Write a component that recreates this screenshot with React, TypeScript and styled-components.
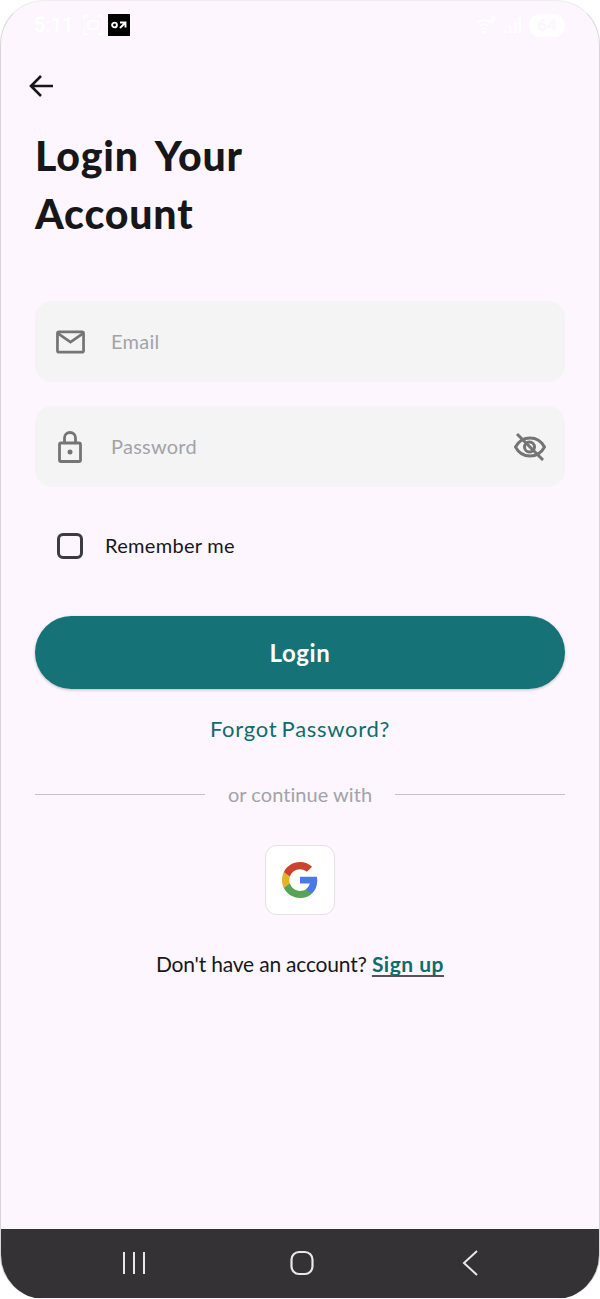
import React from "react";
import styled, { createGlobalStyle } from "styled-components";

const Global = createGlobalStyle`
  html, body { margin: 0; padding: 0; background: #fff; }
  body { font-family: "Lato", "Noto Sans", sans-serif; }
  * { box-sizing: border-box; }
`;

const Phone = styled.div`
  width: 600px;
  height: 1299px;
  background: #fdf6fe;
  border-radius: 44px;
  border: 1px solid #d9d6da;
  border-bottom: 0;
  border-top-color: #efedf0;
  overflow: hidden;
  display: flex;
  flex-direction: column;
`;

const StatusBar = styled.div`
  height: 48px;
  padding: 0 34px 0 33px;
  display: flex;
  align-items: center;
  justify-content: space-between;
  color: #ffffff;
`;

const StatusGroup = styled.div`
  display: flex;
  align-items: center;
  gap: ${(p: { $gap: number }) => p.$gap}px;
`;

const Time = styled.span`
  font-size: 20px;
  font-weight: 500;
  font-family: "Roboto", sans-serif;
`;

const AppBadge = styled.div`
  width: 22px;
  height: 22px;
  background: #000;
  display: flex;
  align-items: center;
  justify-content: center;
  margin-left: -5px;
`;

const Battery = styled.div`
  width: 36px;
  height: 23px;
  border-radius: 12px;
  background: #fff;
  color: #fdf6fe;
  font-family: "Roboto", sans-serif;
  font-size: 17px;
  font-weight: 700;
  display: flex;
  align-items: center;
  justify-content: center;
`;

const Content = styled.div`
  flex: 1;
  padding: 0 34px;
  display: flex;
  flex-direction: column;
`;

const BackButton = styled.div`
  height: 28px;
  margin: 23px 0 0 -7px;
  display: flex;
  align-items: center;
`;

const Title = styled.h1`
  margin: 27px 0 0;
  font-size: 41px;
  line-height: 58px;
  font-weight: 900;
  color: #17171a;
  letter-spacing: 0.85px;
  word-spacing: 7px;
`;

const Field = styled.div`
  height: 81px;
  margin-top: ${(p: { $top: number }) => p.$top}px;
  background: #f4f4f4;
  border-radius: 17px;
  display: flex;
  align-items: center;
  padding: 0 19px 0 19px;
`;

const FieldIcon = styled.div`
  width: 32px;
  display: flex;
  justify-content: center;
`;

const Placeholder = styled.span`
  flex: 1;
  margin-left: 25px;
  padding-bottom: 2px;
  font-size: 20px;
  letter-spacing: 0.25px;
  color: #a3a3a7;
`;

const RememberRow = styled.div`
  margin-top: 46px;
  height: 25px;
  padding-left: 22px;
  display: flex;
  align-items: center;
  gap: 22px;
`;

const Check = styled.div`
  width: 26px;
  height: 26px;
  border: 3px solid #3c3a42;
  border-radius: 6px;
`;

const RememberLabel = styled.span`
  padding-bottom: 2px;
  font-size: 20px;
  letter-spacing: 0.3px;
  color: #17171a;
`;

const LoginButton = styled.div`
  margin-top: 58px;
  height: 73px;
  border-radius: 37px;
  background: #157276;
  box-shadow: 0 1px 3px rgba(0, 0, 0, 0.25);
  color: #fff;
  font-size: 24px;
  font-weight: 700;
  letter-spacing: 0.6px;
  display: flex;
  align-items: center;
  justify-content: center;
`;

const Forgot = styled.div`
  margin-top: 23px;
  text-align: center;
  font-size: 22px;
  line-height: 34px;
  letter-spacing: 0.7px;
  word-spacing: -2px;
  color: #0e6c6c;
`;

const DividerRow = styled.div`
  margin-top: 33px;
  height: 30px;
  display: flex;
  align-items: center;
  gap: 23px;
`;

const Rule = styled.div`
  flex: 1;
  height: 1px;
  background: #c5c3c7;
`;

const DividerText = styled.span`
  font-size: 20px;
  letter-spacing: 0.05px;
  color: #a3a3a7;
`;

const SocialRow = styled.div`
  margin-top: 36px;
  display: flex;
  justify-content: center;
`;

const GoogleTile = styled.div`
  width: 70px;
  height: 70px;
  background: #fff;
  border: 1.5px solid #e4e2e5;
  border-radius: 12px;
  display: flex;
  align-items: center;
  justify-content: center;
`;

const SignupLine = styled.div`
  margin-top: 33px;
  text-align: center;
  font-size: 21px;
  line-height: 32px;
  letter-spacing: -0.2px;
  color: #17171a;
`;

const SignupLink = styled.span`
  font-weight: 700;
  letter-spacing: 0.5px;
  color: #0e6c6c;
  text-decoration: underline;
  text-decoration-color: #55535a;
  text-decoration-thickness: 2px;
  text-decoration-skip-ink: none;
  text-underline-offset: 3px;
`;

const NavBar = styled.div`
  height: 69px;
  background: #343234;
  display: flex;
  align-items: center;
  padding: 0 0 1px 49px;
  margin-bottom: 1px;
`;

const NavSlot = styled.div`
  width: 168px;
  display: flex;
  justify-content: center;
`;

export default function App() {
  return (
    <>
      <Global />
      <Phone>
        <StatusBar>
          <StatusGroup $gap={10}>
            <Time>5:11</Time>
            <svg width="20" height="20" viewBox="0 0 20 20" fill="none" stroke="#fff" strokeWidth="1.4">
              <path d="M1 5V1h4M15 1h4v4M19 15v4h-4M5 19H1v-4" />
              <rect x="5" y="6" width="10" height="8" rx="2.5" />
            </svg>
            <AppBadge>
              <svg width="16" height="8" viewBox="0 0 16 8" fill="none" stroke="#fff" strokeWidth="1.900">
                <circle cx="3.500" cy="4" r="2.400" />
                <path d="M9 1.500h5.500v5M14.500 1.500L9 7" />
              </svg>
            </AppBadge>
          </StatusGroup>
          <StatusGroup $gap={8}>
            <svg width="20" height="18" viewBox="0 0 20 18" fill="none" stroke="#fff" strokeWidth="1.6">
              <path d="M1 7c4-4 10-4 14 0M4 10c2.500-2 5.500-2 8 0M6.500 13c1-1 2-1 3 0" />
              <circle cx="8" cy="16" r="1" fill="#fff" />
              <path d="M16 1h3v2h-3v2h3" strokeWidth="1.2" />
            </svg>
            <svg width="17" height="18" viewBox="0 0 17 18" fill="#fff">
              <rect x="0" y="14" width="2.500" height="3" />
              <rect x="5" y="10" width="2.500" height="7" />
              <rect x="10" y="6" width="2.500" height="11" />
              <rect x="14.500" y="1" width="2.500" height="16" />
            </svg>
            <Battery>64</Battery>
          </StatusGroup>
        </StatusBar>
        <Content>
          <BackButton>
            <svg width="26" height="24" viewBox="0 0 26 24" fill="none" stroke="#17171a" strokeWidth="2.6">
              <path d="M25 12H3M13 2L3 12l10 10" />
            </svg>
          </BackButton>
          <Title>
            Login Your
            <br />
            Account
          </Title>
          <Field $top={58}>
            <FieldIcon>
              <svg width="29" height="24" viewBox="0 0 30 24" fill="none" stroke="#757575" strokeWidth="2.800">
                <rect x="1.500" y="1.500" width="27" height="21" rx="1.500" />
                <path d="M2 3l13 9 13-9" />
              </svg>
            </FieldIcon>
            <Placeholder>Email</Placeholder>
          </Field>
          <Field $top={24}>
            <FieldIcon>
              <svg width="24" height="32" viewBox="0 0 24 32" fill="none" stroke="#757575" strokeWidth="2.800">
                <rect x="1.500" y="12" width="21" height="18.500" rx="1.500" />
                <path d="M6.500 12V7a5.500 5.500 0 0 1 11 0v5" />
                <circle cx="12" cy="21" r="2.500" fill="#757575" stroke="none" />
              </svg>
            </FieldIcon>
            <Placeholder>Password</Placeholder>
            <svg width="32" height="28" viewBox="0 0 32 28" fill="none" stroke="#757575" strokeWidth="3">
              <path d="M1.500 14C5 7.500 10 5 16 5s11 2.500 14.500 9C27 20.500 22 23 16 23S5 20.500 1.500 14z" />
              <circle cx="15.500" cy="14" r="5" />
              <path d="M3 1l26 26" />
            </svg>
          </Field>
          <RememberRow>
            <Check />
            <RememberLabel>Remember me</RememberLabel>
          </RememberRow>
          <LoginButton>Login</LoginButton>
          <Forgot>Forgot Password?</Forgot>
          <DividerRow>
            <Rule />
            <DividerText>or continue with</DividerText>
            <Rule />
          </DividerRow>
          <SocialRow>
            <GoogleTile>
              <svg width="36" height="36" viewBox="0 0 48 48">
                <path fill="#4a78e8" d="M47 24.500c0-1.600-.15-3.200-.4-4.700H24v9h13c-.6 3-2.300 5.500-4.800 7.200v6h7.700C44.400 38 47 31.900 47 24.500z" />
                <path fill="#55a554" d="M24 48c6.500 0 11.900-2.100 15.900-5.800l-7.700-6c-2.200 1.500-4.900 2.300-8.200 2.300-6.300 0-11.600-4.200-13.500-9.900H2.500v6.200C6.500 42.700 14.600 48 24 48z" />
                <path fill="#e5b32b" d="M10.500 28.600c-.5-1.500-.8-3-.8-4.600s.3-3.100.8-4.600v-6.200H2.500C.9 16.400 0 20.100 0 24s.9 7.600 2.500 10.800l8-6.200z" />
                <path fill="#c9432f" d="M24 9.500c3.500 0 6.700 1.200 9.200 3.600l6.900-6.900C35.900 2.400 30.500 0 24 0 14.600 0 6.500 5.300 2.500 13.200l8 6.200C12.400 13.700 17.700 9.500 24 9.500z" />
              </svg>
            </GoogleTile>
          </SocialRow>
          <SignupLine>
            Don't have an account? <SignupLink>Sign up</SignupLink>
          </SignupLine>
        </Content>
        <NavBar>
          <NavSlot>
            <svg width="24" height="24" viewBox="0 0 24 24" fill="none" stroke="#e8e8e8" strokeWidth="2">
              <path d="M2 1v22M12 1v22M22 1v22" />
            </svg>
          </NavSlot>
          <NavSlot>
            <svg width="24" height="26" viewBox="0 0 24 26" fill="none" stroke="#e8e8e8" strokeWidth="2.200">
              <rect x="1.500" y="2" width="21" height="22" rx="7.500" />
            </svg>
          </NavSlot>
          <NavSlot>
            <svg width="16" height="26" viewBox="0 0 16 26" fill="none" stroke="#e8e8e8" strokeWidth="2">
              <path d="M15 1L2 13l13 12" />
            </svg>
          </NavSlot>
        </NavBar>
      </Phone>
    </>
  );
}
